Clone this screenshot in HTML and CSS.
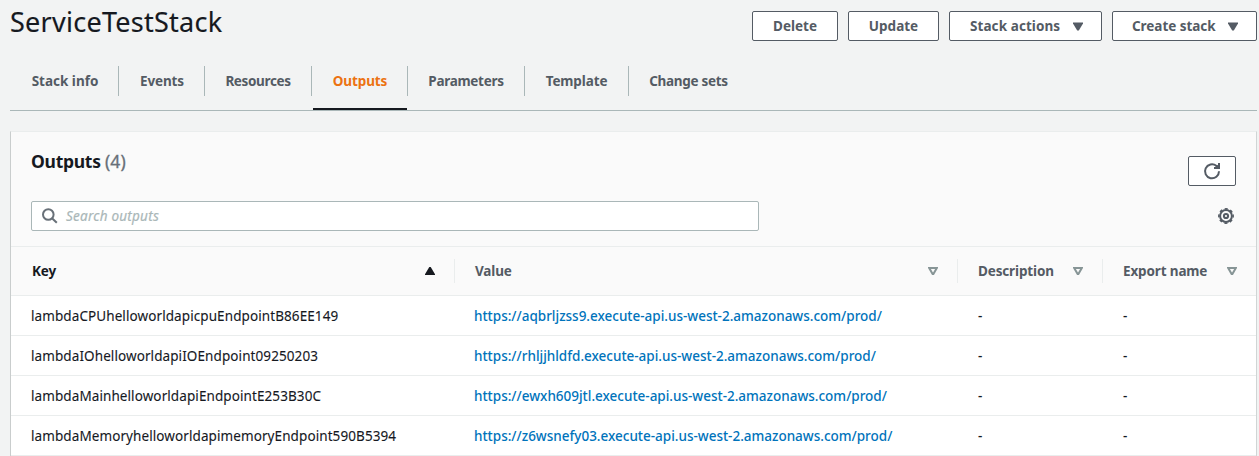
FILE: index.html
```html
<!DOCTYPE html>
<html lang="en">
<head>
<meta charset="utf-8">
<title>ServiceTestStack</title>
<link rel="stylesheet" href="styles.css">
</head>
<body>
<header class="header">
  <h1 class="title">ServiceTestStack</h1>
  <div class="actions">
    <button class="btn btn-delete">Delete</button>
    <button class="btn btn-update">Update</button>
    <button class="btn btn-stack"><span>Stack actions</span><svg class="caret" viewBox="0 0 10 9"><path d="M0 .5h10v1L5.800 8.500H4.200L0 1.500z"/></svg></button>
    <button class="btn btn-create"><span>Create stack</span><svg class="caret" viewBox="0 0 10 9"><path d="M0 .5h10v1L5.800 8.500H4.200L0 1.500z"/></svg></button>
  </div>
</header>
<nav class="tabs">
  <a class="tab tab-info"><span>Stack info</span></a>
  <a class="tab tab-events"><span>Events</span></a>
  <a class="tab tab-resources"><span>Resources</span></a>
  <a class="tab tab-outputs active"><span>Outputs</span></a>
  <a class="tab tab-params"><span>Parameters</span></a>
  <a class="tab tab-template"><span>Template</span></a>
  <a class="tab tab-changes"><span>Change sets</span></a>
</nav>
<main class="panel">
  <div class="panel-head">
    <div class="head-row">
      <h2 class="panel-title">Outputs <span class="count">(4)</span></h2>
      <button class="refresh" aria-label="Refresh"><svg width="18" height="18" viewBox="0 0 18 18"><path d="M16 9.300a7 7 0 1 1-2.700-5.500L15 5.300M16 1v5h-5" fill="none" stroke="#545b64" stroke-width="2"/><path d="M12 5l4-3v4h-4z" fill="#545b64"/></svg></button>
    </div>
    <div class="search-row">
      <div class="search">
        <svg width="16" height="16" viewBox="0 0 16 16"><circle cx="6.3" cy="6.5" r="5.300"/><path d="M10 10.200l4.800 4.600"/></svg>
        <span class="placeholder">Search outputs</span>
      </div>
      <svg class="gear" width="16" height="16" viewBox="0 0 16 16"><circle cx="8" cy="8" r="5.900"/><circle class="teeth" cx="8" cy="8" r="7.200" transform="rotate(-12 8 8)"/><circle cx="8" cy="8" r="2.100"/></svg>
    </div>
  </div>
  <div class="row row-head">
    <div class="cell sorted"><span>Key</span><svg class="sort" viewBox="0 0 10 8"><path d="M0 8V7.200L4.300 0h1.400L10 7.200V8z" fill="#16191f"/></svg></div>
    <div class="cell"><span>Value</span><svg class="sort" viewBox="0 0 10 8"><path d="M1.200 1h7.600L5.400 7h-.8z"/></svg></div>
    <div class="cell"><span>Description</span><svg class="sort" viewBox="0 0 10 8"><path d="M1.200 1h7.600L5.400 7h-.8z"/></svg></div>
    <div class="cell"><span>Export name</span><svg class="sort" viewBox="0 0 10 8"><path d="M1.200 1h7.600L5.400 7h-.8z"/></svg></div>
  </div>
  <div class="row"><div class="cell key">lambdaCPUhelloworldapicpuEndpointB86EE149</div><div class="cell"><a class="link">https://aqbrljzss9.execute-api.us-west-2.amazonaws.com/prod/</a></div><div class="cell dash">-</div><div class="cell dash">-</div></div>
  <div class="row"><div class="cell key">lambdaIOhelloworldapiIOEndpoint09250203</div><div class="cell"><a class="link">https://rhljjhldfd.execute-api.us-west-2.amazonaws.com/prod/</a></div><div class="cell dash">-</div><div class="cell dash">-</div></div>
  <div class="row"><div class="cell key">lambdaMainhelloworldapiEndpointE253B30C</div><div class="cell"><a class="link">https://ewxh609jtl.execute-api.us-west-2.amazonaws.com/prod/</a></div><div class="cell dash">-</div><div class="cell dash">-</div></div>
  <div class="row"><div class="cell key">lambdaMemoryhelloworldapimemoryEndpoint590B5394</div><div class="cell"><a class="link">https://z6wsnefy03.execute-api.us-west-2.amazonaws.com/prod/</a></div><div class="cell dash">-</div><div class="cell dash">-</div></div>
</main>
</body>
</html>
```
FILE: styles.css
```css
* { box-sizing: border-box; }
body {
  margin: 0;
  height: 456px;
  overflow: hidden;
  background: #f2f3f3;
  color: #16191f;
  font: 14px/20px "Noto Sans", "Open Sans", sans-serif;
}
h1, h2 { margin: 0; font-weight: 400; }
button { font: inherit; padding: 0; }

.header { display: flex; justify-content: space-between; height: 66px; padding: 0 2px 0 10px; }
.title { font-size: 27px; line-height: 36px; padding-top: 4px; letter-spacing: .26px; -webkit-text-stroke: .15px #16191f; }
.actions { display: flex; gap: 10px; padding-top: 11px; }
.btn {
  display: flex; align-items: center; justify-content: center; gap: 13px;
  height: 30px; background: #fff; border: 1px solid #545b64; border-radius: 2px;
  color: #545b64; font-weight: 700; font-size: 13.5px; white-space: nowrap;
}
.btn-delete { width: 86px; }
.btn-update { width: 91px; }
.btn-stack { width: 153px; letter-spacing: .08px; }
.btn-create { width: 145px; letter-spacing: -.05px; }
.btn-stack { justify-content: space-between; padding: 0 18px 0 20px; }
.btn-create { justify-content: space-between; padding: 0 18px 0 19px; }
.btn-create .caret { margin-right: 1px; }
.caret { width: 10px; height: 9px; flex: none; fill: #545b64; }

.tabs { display: flex; height: 45px; margin: 0 2px 0 10px; border-bottom: 1px solid #aab7b8; }
.tab { position: relative; height: 30px; padding-left: 1px; color: #545b64; font-weight: 700; font-size: 13.5px; letter-spacing: -.12px; line-height: 30px; text-align: center; border-right: 1px solid #aab7b8; white-space: nowrap; }
.tab-info { width: 109px; letter-spacing: 0; padding-left: 2px; }
.tab-events { width: 86px; }
.tab-resources { width: 107px; letter-spacing: -.36px; padding-left: 0; }
.tab-outputs { width: 96px; }
.tab-params { width: 117px; letter-spacing: -.3px; padding-left: 0; }
.tab-template { width: 104px; padding-left: 0; }
.tab-changes { width: 121px; border-right: 0; letter-spacing: -.3px; padding-left: 0; margin-left: -1px; }
.active { color: #ec7211; }
.active::after { content: ""; position: absolute; left: 1px; right: 0; top: 42px; height: 2px; background: #16191f; }

.panel { margin: 20px 2px 0 10px; background: #fff; border: 1px solid #eaeded; border-left-color: #c9cdcd; border-right-color: #d0d5d5; height: 330px; }
.panel-head { background: #fafafa; height: 114px; padding: 0 20px; }
.head-row { display: flex; justify-content: space-between; height: 69px; }
.panel-title { font-size: 17.5px; line-height: 24px; padding-top: 17px; font-weight: 700; letter-spacing: -.28px; }
.count { color: #687078; font-weight: 400; letter-spacing: .1px; -webkit-text-stroke: .3px #687078; }
.refresh { width: 48px; height: 30px; margin-top: 24px; display: flex; align-items: center; justify-content: center; background: #fff; border: 1px solid #545b64; border-radius: 2px; }
.search-row { display: flex; justify-content: space-between; }
.search { width: 728px; height: 30px; border: 1px solid #aab7b8; border-radius: 2px; background: #fff; display: flex; align-items: center; padding-left: 10px; gap: 8px; fill: none; stroke: #687078; stroke-width: 2; }
.placeholder { font-style: italic; color: #aab7b8; font-size: 13.5px; letter-spacing: .24px; -webkit-text-stroke: .2px #aab7b8; }
.gear { margin: 7px 2px 0 0; fill: none; stroke: #545b64; stroke-width: 2; overflow: visible; }
.teeth { stroke-width: 1.500; stroke-dasharray: 3 2.655; }

.row { display: grid; grid-template-columns: 444px 503px 145px 1fr; height: 40px; border-bottom: 1px solid #eaeded; align-items: center; }
.cell { padding-left: 20px; white-space: nowrap; font-size: 13.5px; }
.key { letter-spacing: .09px; -webkit-text-stroke: .1px #16191f; }
.dash { font-weight: 500; }
.row-head { height: 50px; background: #fafafa; border-top: 1px solid #eaeded; color: #545b64; font-weight: 700; }
.row-head .cell { display: flex; justify-content: space-between; align-items: center; height: 24px; padding-right: 19px; border-right: 1px solid #eaeded; letter-spacing: -.14px; }
.row-head .cell:last-child { border-right: 0; }
.row-head .sorted { color: #16191f; padding-left: 21px; }
.sort { width: 10px; height: 8px; fill: none; stroke: #879596; stroke-width: 2; }
.sorted .sort { stroke: none; }
.link { color: #0073bb; font-weight: 500; letter-spacing: -.01px; margin-left: -1px; }
```
